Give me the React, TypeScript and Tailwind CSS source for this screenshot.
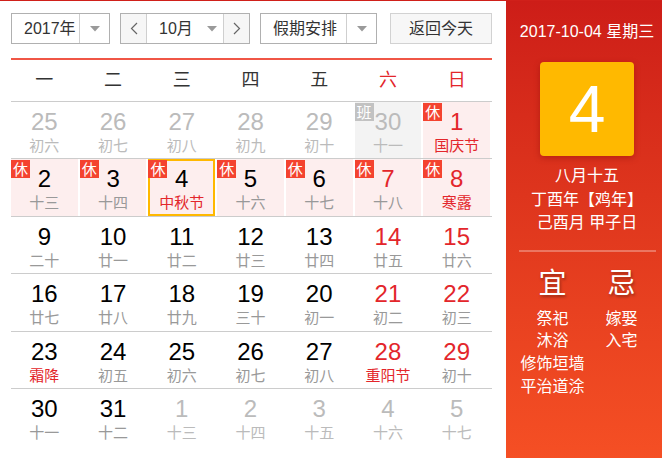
import React from 'react';

type Cell = {
  d: number;
  l: string;
  other?: boolean;
  weekend?: boolean;
  fest?: boolean;
  badge?: '休' | '班';
  selected?: boolean;
};

const weeks: Cell[][] = [
  [
    { d: 25, l: '初六', other: true },
    { d: 26, l: '初七', other: true },
    { d: 27, l: '初八', other: true },
    { d: 28, l: '初九', other: true },
    { d: 29, l: '初十', other: true },
    { d: 30, l: '十一', other: true, badge: '班' },
    { d: 1, l: '国庆节', weekend: true, fest: true, badge: '休' },
  ],
  [
    { d: 2, l: '十三', badge: '休' },
    { d: 3, l: '十四', badge: '休' },
    { d: 4, l: '中秋节', fest: true, badge: '休', selected: true },
    { d: 5, l: '十六', badge: '休' },
    { d: 6, l: '十七', badge: '休' },
    { d: 7, l: '十八', weekend: true, badge: '休' },
    { d: 8, l: '寒露', weekend: true, fest: true, badge: '休' },
  ],
  [
    { d: 9, l: '二十' },
    { d: 10, l: '廿一' },
    { d: 11, l: '廿二' },
    { d: 12, l: '廿三' },
    { d: 13, l: '廿四' },
    { d: 14, l: '廿五', weekend: true },
    { d: 15, l: '廿六', weekend: true },
  ],
  [
    { d: 16, l: '廿七' },
    { d: 17, l: '廿八' },
    { d: 18, l: '廿九' },
    { d: 19, l: '三十' },
    { d: 20, l: '初一' },
    { d: 21, l: '初二', weekend: true },
    { d: 22, l: '初三', weekend: true },
  ],
  [
    { d: 23, l: '霜降', fest: true },
    { d: 24, l: '初五' },
    { d: 25, l: '初六' },
    { d: 26, l: '初七' },
    { d: 27, l: '初八' },
    { d: 28, l: '重阳节', weekend: true, fest: true },
    { d: 29, l: '初十', weekend: true },
  ],
  [
    { d: 30, l: '十一' },
    { d: 31, l: '十二' },
    { d: 1, l: '十三', other: true },
    { d: 2, l: '十四', other: true },
    { d: 3, l: '十五', other: true },
    { d: 4, l: '十六', other: true },
    { d: 5, l: '十七', other: true },
  ],
];

const rowHeights = ['h-[57px]', 'h-[58px]', 'h-[57px]', 'h-[58px]', 'h-[57px]', 'h-[58px]'];

const font = { fontFamily: '"Liberation Sans", Arial, "Noto Sans CJK SC", sans-serif' };

const Caret = () => (
  <svg width="10" height="6" viewBox="0 0 10 6">
    <polygon points="0,0 10,0 5,5.5" fill="#9a9a9a" />
  </svg>
);

const Chevron = ({ dir }: { dir: 'left' | 'right' }) => (
  <svg width="8" height="13" viewBox="0 0 8 13">
    <polyline
      points={dir === 'left' ? '7,1 1.5,6.5 7,12' : '1,1 6.5,6.5 1,12'}
      fill="none"
      stroke="#666"
      strokeWidth="1.2"
    />
  </svg>
);

const DayCell = ({ c }: { c: Cell }) => {
  let bg = 'bg-white';
  if (c.badge === '休') bg = 'bg-[#fdeeee]';
  if (c.badge === '班') bg = 'bg-[#f3f3f3]';

  let numColor = 'text-black';
  if (c.weekend) numColor = 'text-[#e3262b]';
  if (c.other) numColor = 'text-[#bbbbbb]';

  let lunarColor = 'text-[#999999]';
  if (c.fest) lunarColor = 'text-[#e3262b]';
  if (c.other) lunarColor = 'text-[#bbbbbb]';

  return (
    <div
      className={`relative mr-[2px] h-full flex flex-col items-center ${bg} ${
        c.selected ? 'border-2 border-[#ffb800] pt-[6px]' : 'pt-[8px]'
      }`}
    >
      {c.badge && (
        <span
          className={`absolute ${c.selected ? '-top-[1px] -left-[2px]' : 'top-[1px] left-0'} w-[19px] h-[18px] flex items-center justify-center text-[15px] leading-none text-white ${
            c.badge === '休' ? 'bg-[#f4432f]' : 'bg-[#c2c2c2]'
          }`}
        >
          {c.badge}
        </span>
      )}
      <span className={`text-[24px] leading-[24px] ${numColor}`}>{c.d}</span>
      <span className={`mt-[3px] text-[15px] leading-[18px] ${lunarColor}`}>{c.l}</span>
    </div>
  );
};

export default function App() {
  const weekdays = ['一', '二', '三', '四', '五', '六', '日'];

  return (
    <div className="w-[662px] h-[458px] flex overflow-hidden bg-white border-t border-[#d0201a]" style={font}>
      {/* left: calendar */}
      <div className="w-[506px] shrink-0 pl-[11px] pr-[14px] pt-[12px]">
        <div className="flex h-[31px] text-[16px] text-[#333]">
          <div className="w-[99px] flex border border-[#b0b0b0]">
            <div className="w-[68px] flex items-center pl-[12px] border-r border-[#cfcfcf]">2017年</div>
            <div className="flex-1 flex items-center justify-center">
              <Caret />
            </div>
          </div>

          <div className="ml-[10px] w-[130px] flex border border-[#b0b0b0]">
            <div className="w-[26px] flex items-center justify-center bg-[#f6f6f6] border-r border-[#cfcfcf]">
              <Chevron dir="left" />
            </div>
            <div className="flex-1 flex items-center pl-[12px] gap-[14px]">
              <span>10月</span>
              <Caret />
            </div>
            <div className="w-[26px] flex items-center justify-center bg-[#f6f6f6] border-l border-[#cfcfcf]">
              <Chevron dir="right" />
            </div>
          </div>

          <div className="ml-[10px] w-[117px] flex border border-[#b0b0b0]">
            <div className="w-[86px] flex items-center pl-[12px] border-r border-[#cfcfcf]">假期安排</div>
            <div className="flex-1 flex items-center justify-center">
              <Caret />
            </div>
          </div>

          <div className="ml-[13px] w-[102px] flex items-center justify-center bg-[#f7f7f7] border border-[#d2d2d2]">
            返回今天
          </div>
        </div>

        <div className="mt-[14px] h-[2px] bg-[#f05646]" />

        <div className="grid grid-cols-7 h-[41px] items-center text-[18px]">
          {weekdays.map((w, i) => (
            <div key={w} className={`text-center pr-[2px] ${i >= 5 ? 'text-[#e3262b]' : 'text-[#333]'}`}>
              {w}
            </div>
          ))}
        </div>

        {weeks.map((row, ri) => (
          <div key={ri} className={`grid grid-cols-7 border-t border-[#cccccc] ${rowHeights[ri]}`}>
            {row.map((c, ci) => (
              <DayCell key={ci} c={c} />
            ))}
          </div>
        ))}
      </div>

      {/* right: detail panel */}
      <div className="w-[162px] shrink-0 bg-linear-to-b from-[#cd1d18] to-[#f54f24] text-white flex flex-col items-center pt-[21px]">
        <div className="text-[16px] leading-[20px] whitespace-nowrap">2017-10-04 星期三</div>
        <div className="mt-[20px] w-[94px] h-[94px] rounded-[4px] bg-[#ffb900] shadow-[0_2px_6px_rgba(120,0,0,0.35)] flex items-center justify-center text-[66px] leading-none">
          4
        </div>
        <div className="mt-[8px] text-[16px] leading-[23.5px] text-center">
          <div>八月十五</div>
          <div>丁酉年【鸡年】</div>
          <div>己酉月 甲子日</div>
        </div>
        <div className="mt-[15px] w-[137px] h-[2px] bg-white/30" />
        <div className="mt-[16px] flex w-[138px]">
          <div className="w-[69px] flex flex-col items-center">
            <div className="text-[28px] leading-[32px] [text-shadow:1px_2px_3px_rgba(0,0,0,0.35)]">宜</div>
            <div className="mt-[8px] text-[16px] leading-[22.7px] text-center whitespace-nowrap">
              <div>祭祀</div>
              <div>沐浴</div>
              <div>修饰垣墙</div>
              <div>平治道涂</div>
            </div>
          </div>
          <div className="w-[69px] flex flex-col items-center">
            <div className="text-[28px] leading-[32px] [text-shadow:1px_2px_3px_rgba(0,0,0,0.35)]">忌</div>
            <div className="mt-[8px] text-[16px] leading-[22.7px] text-center whitespace-nowrap">
              <div>嫁娶</div>
              <div>入宅</div>
            </div>
          </div>
        </div>
      </div>
    </div>
  );
}
